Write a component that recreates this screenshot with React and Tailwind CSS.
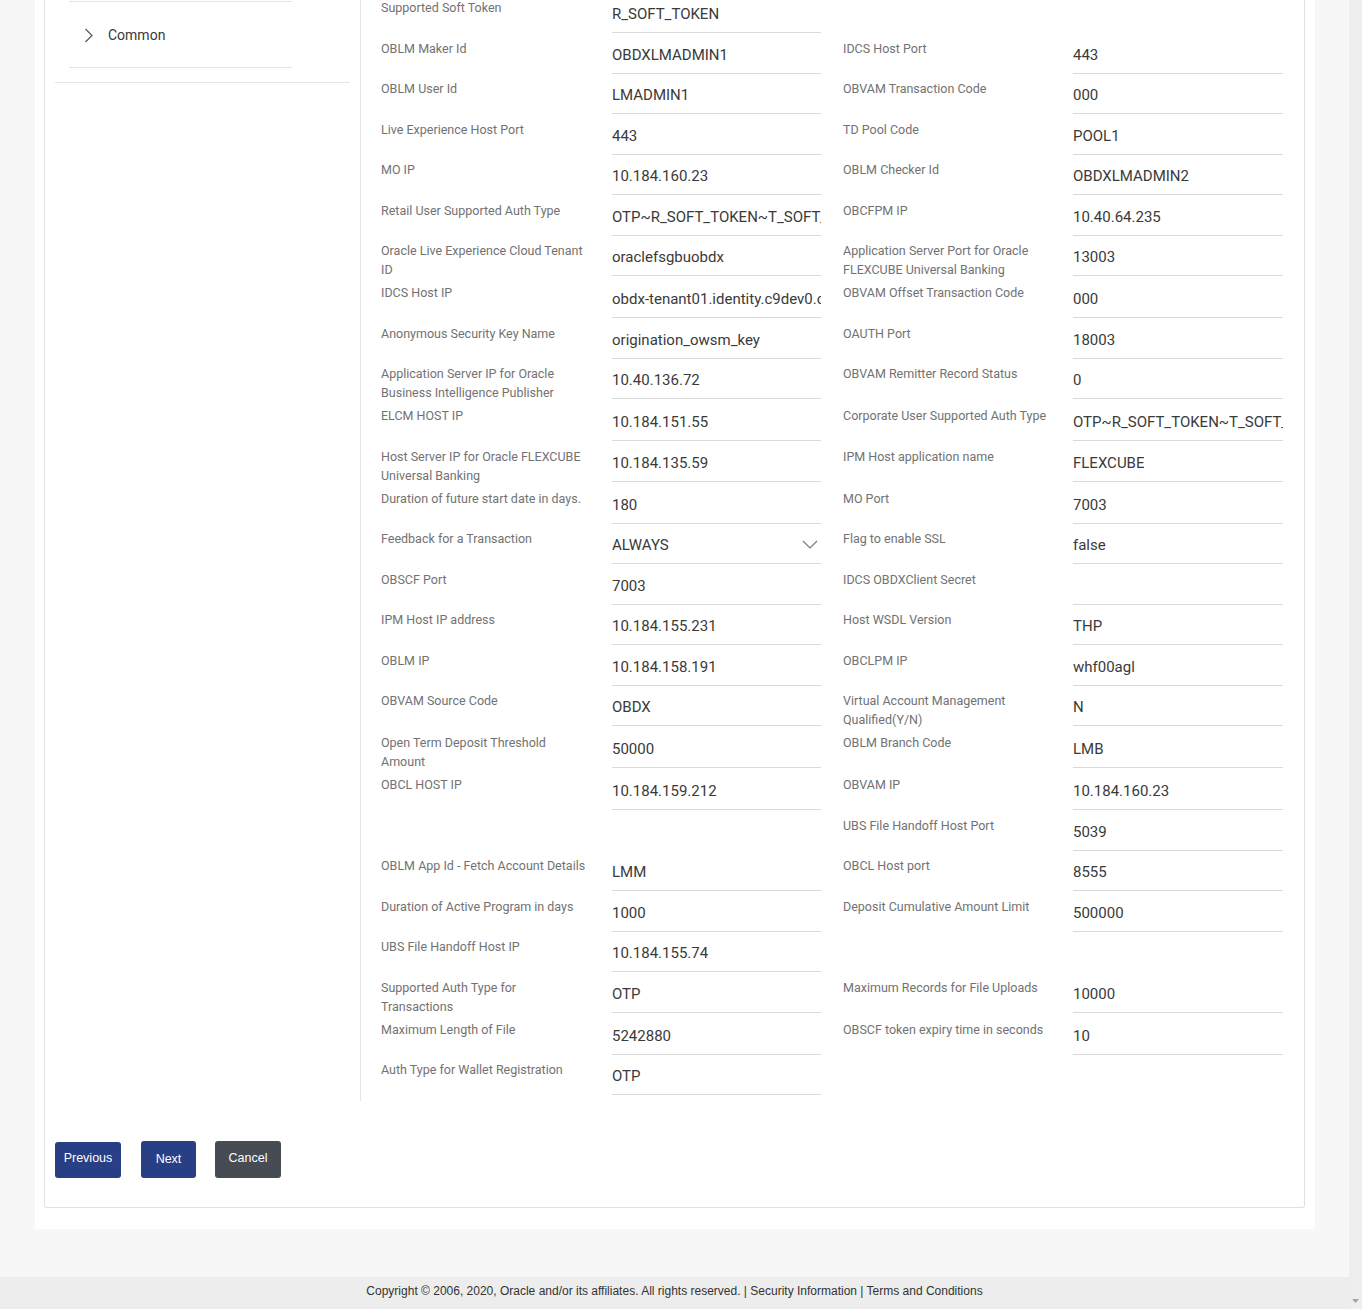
import React from 'react';

const rows = [
  [['Supported Soft Token', 'R_SOFT_TOKEN'], null],
  [['OBLM Maker Id', 'OBDXLMADMIN1'], ['IDCS Host Port', '443']],
  [['OBLM User Id', 'LMADMIN1'], ['OBVAM Transaction Code', '000']],
  [['Live Experience Host Port', '443'], ['TD Pool Code', 'POOL1']],
  [['MO IP', '10.184.160.23'], ['OBLM Checker Id', 'OBDXLMADMIN2']],
  [['Retail User Supported Auth Type', 'OTP~R_SOFT_TOKEN~T_SOFT_TOKEN'], ['OBCFPM IP', '10.40.64.235']],
  [['Oracle Live Experience Cloud Tenant ID', 'oraclefsgbuobdx'], ['Application Server Port for Oracle FLEXCUBE Universal Banking', '13003']],
  [['IDCS Host IP', 'obdx-tenant01.identity.c9dev0.oc9qadev.com'], ['OBVAM Offset Transaction Code', '000']],
  [['Anonymous Security Key Name', 'origination_owsm_key'], ['OAUTH Port', '18003']],
  [['Application Server IP for Oracle Business Intelligence Publisher', '10.40.136.72'], ['OBVAM Remitter Record Status', '0']],
  [['ELCM HOST IP', '10.184.151.55'], ['Corporate User Supported Auth Type', 'OTP~R_SOFT_TOKEN~T_SOFT_TOKEN']],
  [['Host Server IP for Oracle FLEXCUBE Universal Banking', '10.184.135.59'], ['IPM Host application name', 'FLEXCUBE']],
  [['Duration of future start date in days.', '180'], ['MO Port', '7003']],
  [['Feedback for a Transaction', 'ALWAYS', true], ['Flag to enable SSL', 'false']],
  [['OBSCF Port', '7003'], ['IDCS OBDXClient Secret', '']],
  [['IPM Host IP address', '10.184.155.231'], ['Host WSDL Version', 'THP']],
  [['OBLM IP', '10.184.158.191'], ['OBCLPM IP', 'whf00agl']],
  [['OBVAM Source Code', 'OBDX'], ['Virtual Account Management Qualified(Y/N)', 'N']],
  [['Open Term Deposit Threshold Amount', '50000'], ['OBLM Branch Code', 'LMB']],
  [['OBCL HOST IP', '10.184.159.212'], ['OBVAM IP', '10.184.160.23']],
  [null, ['UBS File Handoff Host Port', '5039']],
  [['OBLM App Id - Fetch Account Details', 'LMM'], ['OBCL Host port', '8555']],
  [['Duration of Active Program in days', '1000'], ['Deposit Cumulative Amount Limit', '500000']],
  [['UBS File Handoff Host IP', '10.184.155.74'], null],
  [['Supported Auth Type for Transactions', 'OTP'], ['Maximum Records for File Uploads', '10000']],
  [['Maximum Length of File', '5242880'], ['OBSCF token expiry time in seconds', '10']],
  [['Auth Type for Wallet Registration', 'OTP'], null],
];

const Cell = ({ item, right }) => {
  if (!item) return <div className={right ? 'w-[440px]' : 'w-[462px]'} />;
  const [label, value, select] = item;
  return (
    <div className={right ? 'flex items-start w-[440px]' : 'flex items-start w-[462px]'}>
      <div className={right ? 'w-[230px] pr-[20px] mb-[4px] text-[12.5px] leading-[19px] text-[#727272]' : 'w-[231px] pr-[21px] mb-[4px] text-[12.5px] leading-[19px] text-[#727272]'}>
        {label}
      </div>
      <div className={right ? 'w-[210px] h-[35px] mb-[5.5px] pt-[5px] border-b border-[#dadada] text-[15px] leading-[22px] text-[#3a3a3a] whitespace-nowrap overflow-hidden flex items-start justify-between' : 'w-[209px] h-[35px] mb-[5.5px] pt-[5px] border-b border-[#dadada] text-[15px] leading-[22px] text-[#3a3a3a] whitespace-nowrap overflow-hidden flex items-start justify-between'}>
        <span className="min-w-0 overflow-hidden">{value}</span>
        {select && (
          <svg width="16" height="9" viewBox="0 0 16 9" className="mt-[6px] mr-[3px] shrink-0">
            <polyline points="1,1 8,8 15,1" fill="none" stroke="#7a7a7a" strokeWidth="1.2" />
          </svg>
        )}
      </div>
    </div>
  );
};

const App = () => {
  return (
    <div className="flex h-[1309px] overflow-hidden bg-[#f7f7f7] font-['Roboto',sans-serif]">
      <div className="flex-1 flex flex-col">
        <div className="w-[1280px] ml-[35px] bg-white pl-[9px] pr-[10px] pb-[21px]">
          <div className="border border-t-0 border-[#e1e1e1] rounded-b-[3px] pl-[10px] pb-[29px]">
            <div className="flex items-start">
              {/* side menu */}
              <div className="w-[295px] mt-[1px] border-b border-[#e5e5e5]">
                <div className="ml-[14px] w-[223px] mb-[14px] border-t border-b border-[#e5e5e5]">
                  <div className="h-[65px] flex items-center pt-[2px]">
                    <svg width="10" height="15" viewBox="0 0 10 15" className="ml-[15px]">
                      <polyline points="1.5,1 8,7.5 1.5,14" fill="none" stroke="#555" strokeWidth="1.2" />
                    </svg>
                    <span className="ml-[14px] text-[14px] text-[#3a3a3a]">Common</span>
                  </div>
                </div>
              </div>

              {/* form */}
              <div className="ml-[10px] border-l border-[#e5e5e5] pl-[20px]">
                <div className="-mt-[2px]">
                  {rows.map((r, i) => (
                    <div key={i} className="flex items-start">
                      <Cell item={r[0]} />
                      <Cell item={r[1]} right />
                    </div>
                  ))}
                </div>
              </div>
            </div>

            <div className="flex items-end mt-[40px] font-['Liberation_Sans',sans-serif] text-[12.5px] text-white">
              <button className="w-[66px] h-[36px] pb-[3px] rounded-[3px] bg-[#283e85]">Previous</button>
              <button className="ml-[20px] w-[55px] h-[37px] rounded-[3px] bg-[#283e85]">Next</button>
              <button className="ml-[19px] w-[66px] h-[37px] pb-[2px] rounded-[3px] bg-[#464b54]">Cancel</button>
            </div>
          </div>
        </div>

        <div className="mt-auto h-[32px] pt-[6px] leading-[16px] bg-[#ededed] text-center text-[12px] text-[#333] font-['Liberation_Sans_Narrow','Liberation_Sans',sans-serif]">
          Copyright © 2006, 2020, Oracle and/or its affiliates. All rights reserved. | Security Information | Terms and Conditions
        </div>
      </div>

      {/* scrollbar track */}
      <div className="w-[13px] bg-[#eeeeee] flex flex-col justify-end items-center pb-[6px]">
        <svg width="7" height="4" viewBox="0 0 7 4">
          <polygon points="0,0 7,0 3.5,4" fill="#a3a3a3" />
        </svg>
      </div>
    </div>
  );
};

export default App;
